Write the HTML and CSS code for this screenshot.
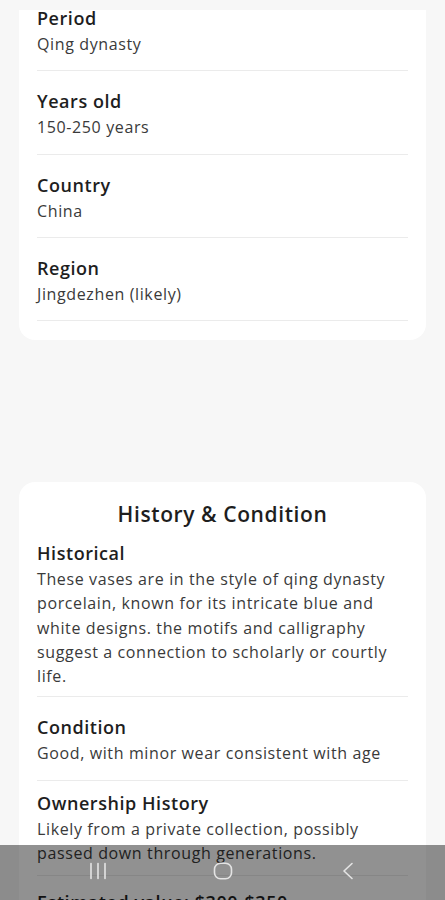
FILE: index.html
```html
<!DOCTYPE html>
<html lang="en">
<head>
<meta charset="utf-8">
<title>History &amp; Condition</title>
<link rel="stylesheet" href="styles.css">
</head>
<body>
<div class="top-strip"></div>
<main class="page">
  <section class="card card-details">
    <div class="row">
      <div class="label">Period</div>
      <div class="value">Qing dynasty</div>
    </div>
    <div class="row">
      <div class="label">Years old</div>
      <div class="value">150-250 years</div>
    </div>
    <div class="row">
      <div class="label">Country</div>
      <div class="value">China</div>
    </div>
    <div class="row">
      <div class="label">Region</div>
      <div class="value">Jingdezhen (likely)</div>
    </div>
  </section>

  <section class="card card-history">
    <h2 class="card-title">History &amp; Condition</h2>
    <div class="row row-historical">
      <div class="label">Historical</div>
      <div class="value">These vases are in the style of qing dynasty porcelain, known for its intricate blue and white designs. the motifs and calligraphy suggest a connection to scholarly or courtly life.</div>
    </div>
    <div class="row row-condition">
      <div class="label">Condition</div>
      <div class="value">Good, with minor wear consistent with age</div>
    </div>
    <div class="row row-ownership">
      <div class="label">Ownership History</div>
      <div class="value">Likely from a private collection, possibly passed down through generations.</div>
    </div>
    <div class="row row-price">
      <div class="label">Estimated value: $300-$350</div>
    </div>
  </section>
</main>

<nav class="sys-nav">
  <div class="nav-item">
    <svg width="18" height="18" viewBox="0 0 18 18" fill="none" stroke="#e4e4e4" stroke-width="1.6" stroke-linecap="round">
      <path d="M2 1.5v15M9 1.5v15M16 1.5v15"/>
    </svg>
  </div>
  <div class="nav-item">
    <svg width="20" height="18" viewBox="0 0 20 18" fill="none" stroke="#e4e4e4" stroke-width="1.6">
      <rect x="1.5" y="1.3" width="17" height="15.4" rx="6"/>
    </svg>
  </div>
  <div class="nav-item">
    <svg width="12" height="18" viewBox="0 0 12 18" fill="none" stroke="#e4e4e4" stroke-width="1.6" stroke-linecap="round" stroke-linejoin="round">
      <path d="M10 1.5L2 9l8 7.5"/>
    </svg>
  </div>
</nav>
</body>
</html>
```

FILE: styles.css
```css
* { box-sizing: border-box; }

html, body {
  margin: 0;
  padding: 0;
}

body {
  background: #f7f7f7;
  font-family: "Open Sans", "Noto Sans", sans-serif;
  color: #1e1e1e;
  height: 900px;
  overflow: hidden;
}

.top-strip {
  position: fixed;
  top: 0;
  left: 0;
  right: 0;
  height: 10px;
  background: #f7f7f7;
  z-index: 5;
}

.page {
  padding: 0 19px;
}

.card {
  background: #ffffff;
  border-radius: 16px;
  padding: 0 18px;
}

.card-details {
  margin-top: -12px;
  padding-bottom: 19px;
}

.card-history {
  margin-top: 142px;
  padding-top: 18px;
}

.card-title {
  margin: 0 0 12px;
  text-align: center;
  font-size: 21px;
  line-height: 28px;
  font-weight: 600;
  letter-spacing: 0.6px;
  color: #1e1e1e;
}

.row {
  padding: 17px 0 14px;
  border-bottom: 1px solid #ebebeb;
}

.label {
  font-size: 18px;
  line-height: 26px;
  font-weight: 600;
  letter-spacing: 0.55px;
  color: #1e1e1e;
}

.value {
  margin-top: 1px;
  font-size: 16px;
  line-height: 24.25px;
  font-weight: 400;
  letter-spacing: 0.62px;
  color: #3a3a3a;
}

.row-historical {
  padding-top: 0;
  padding-bottom: 8px;
}

.row-condition {
  padding-top: 17px;
  padding-bottom: 14px;
}

.row-ownership {
  padding-top: 9px;
  padding-bottom: 10px;
}

.row-price {
  padding-top: 13px;
  border-bottom: none;
}

.sys-nav {
  position: fixed;
  left: 0;
  right: 0;
  bottom: 0;
  height: 55px;
  background: rgba(0, 0, 0, 0.43);
  display: flex;
  justify-content: center;
  align-items: flex-start;
  padding-top: 17px;
  z-index: 10;
}

.nav-item {
  width: 125px;
  height: 18px;
  display: flex;
  justify-content: center;
  align-items: center;
}
```
